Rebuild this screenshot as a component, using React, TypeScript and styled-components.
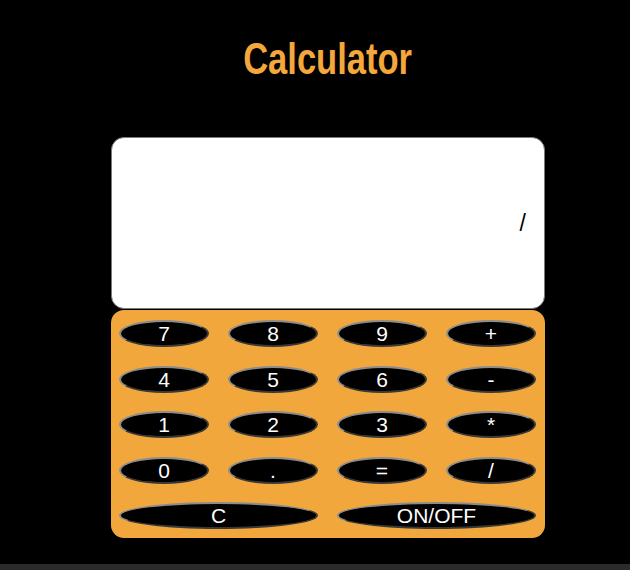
import React from "react";
import styled, { createGlobalStyle } from "styled-components";

const Global = createGlobalStyle`
  html, body { margin: 0; padding: 0; background: #000; }
  body { font-family: "Liberation Sans", Arial, sans-serif; }
`;

const Page = styled.div`
  width: 630px;
  height: 570px;
  background: #000;
  display: flex;
  flex-direction: column;
  box-sizing: border-box;
`;

const Main = styled.main`
  flex: 1;
  display: flex;
  flex-direction: column;
  padding-left: 111px;
`;

const Title = styled.h1`
  margin: 37px 0 0 0;
  width: 434px;
  text-align: center;
  color: #f4a73b;
  font-family: "Liberation Sans", Arial, sans-serif;
  font-weight: 700;
  font-size: 44px;
  line-height: 44px;
`;

const TitleText = styled.span`
  display: inline-block;
  transform: scaleX(0.785);
  transform-origin: center;
`;

const Calc = styled.div`
  margin-top: 56px;
  width: 434px;
  display: flex;
  flex-direction: column;
  gap: 1px;
`;

const Display = styled.div`
  box-sizing: border-box;
  height: 172px;
  background: #fff;
  border: 1.5px solid #7a7a7a;
  border-radius: 13px;
  display: flex;
  align-items: center;
  justify-content: flex-end;
  padding-right: 18px;
  color: #000;
  font-size: 23px;
`;

const Keypad = styled.div`
  box-sizing: border-box;
  background: #f2a73c;
  border-radius: 13px;
  padding: 10px 8px 9px 8px;
  display: grid;
  grid-template-columns: repeat(4, 90px);
  grid-auto-rows: 27px;
  column-gap: 19px;
  row-gap: 18.5px;
`;

const Key = styled.button<{ $span?: number }>`
  grid-column: span ${(p) => p.$span ?? 1};
  box-sizing: border-box;
  margin: 0;
  padding: 0;
  height: 27px;
  background: #000;
  color: #fff;
  border: 2px outset #8c8c8c;
  border-radius: 50%;
  font-family: "Liberation Sans", Arial, sans-serif;
  font-size: 21px;
  line-height: 1;
  display: flex;
  align-items: center;
  justify-content: center;
  cursor: pointer;
`;

const Footer = styled.div`
  height: 6px;
  background: #2b2b2b;
`;

const keys = ["7", "8", "9", "+", "4", "5", "6", "-", "1", "2", "3", "*", "0", ".", "=", "/"];

export default function App() {
  return (
    <>
      <Global />
      <Page>
        <Main>
          <Title>
            <TitleText>Calculator</TitleText>
          </Title>
          <Calc>
            <Display>/</Display>
            <Keypad>
              {keys.map((k) => (
                <Key key={k}>{k}</Key>
              ))}
              <Key $span={2}>C</Key>
              <Key $span={2}>ON/OFF</Key>
            </Keypad>
          </Calc>
        </Main>
        <Footer />
      </Page>
    </>
  );
}
